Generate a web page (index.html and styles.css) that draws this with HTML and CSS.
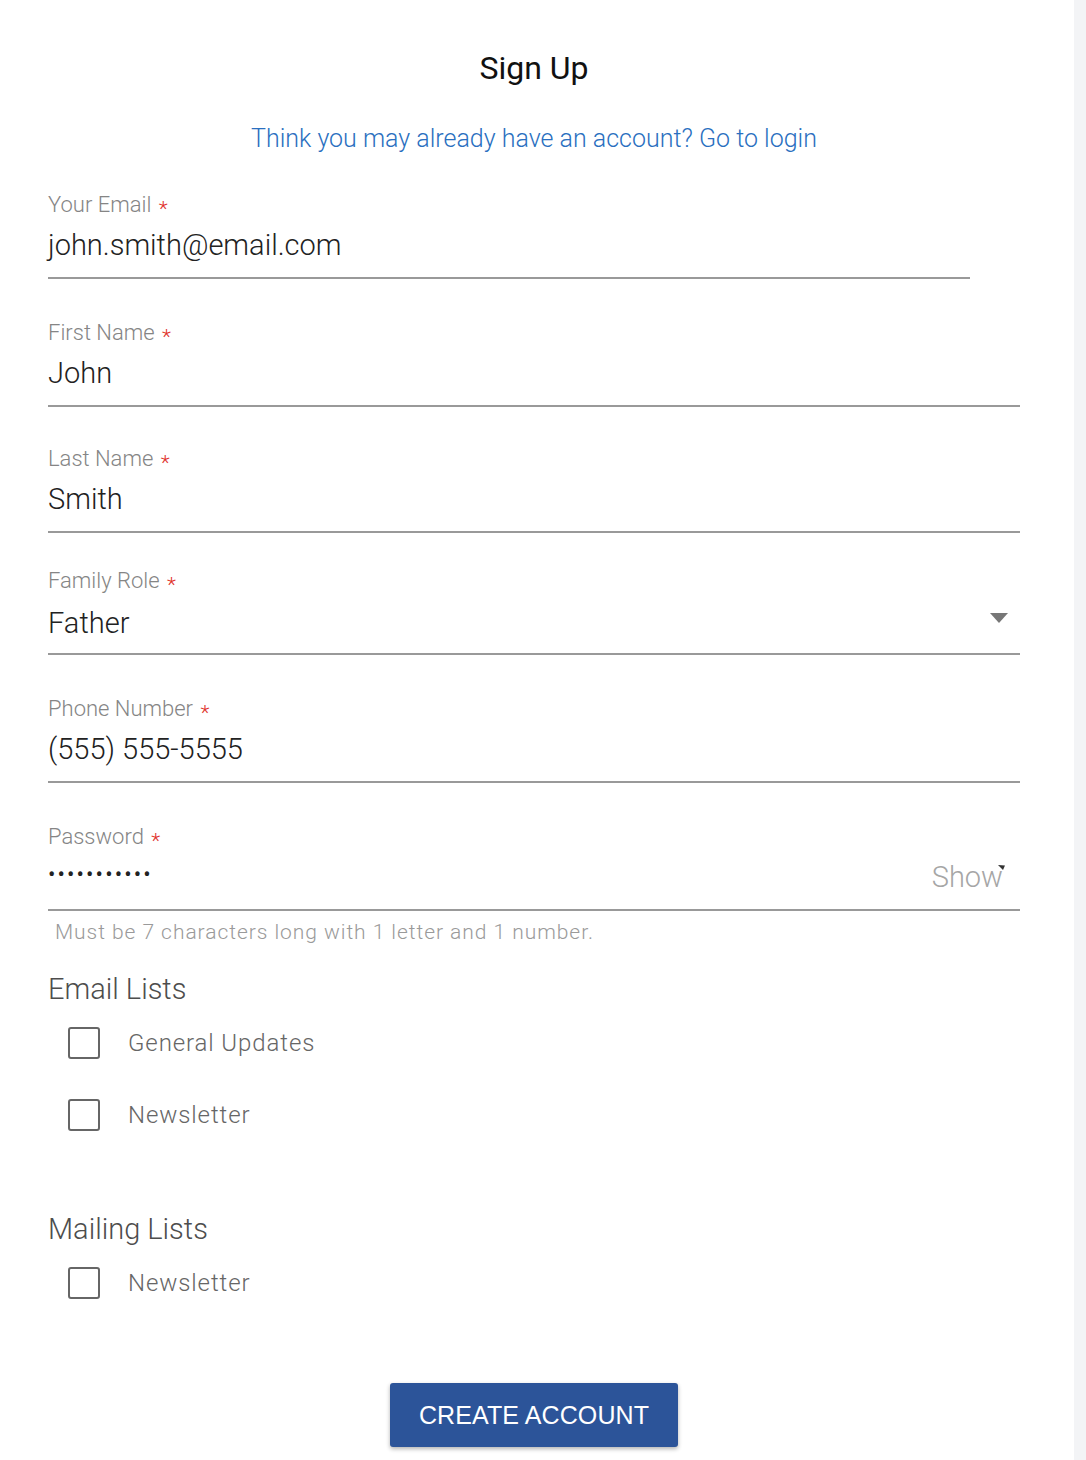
FILE: index.html
```html
<!DOCTYPE html>
<html lang="en">
<head>
<meta charset="utf-8">
<title>Sign Up</title>
<link rel="stylesheet" href="styles.css">
</head>
<body>
<main class="signup">
  <h1 class="title">Sign Up</h1>
  <p class="login"><a class="login-link" href="#">Think you may already have an account? Go to login</a></p>

  <div class="field field-email">
    <label class="label">Your Email <span class="req">*</span></label>
    <div class="control"><span class="value">john.smith@email.com</span></div>
  </div>

  <div class="field">
    <label class="label">First Name <span class="req">*</span></label>
    <div class="control"><span class="value">John</span></div>
  </div>

  <div class="field field-sm">
    <label class="label">Last Name <span class="req">*</span></label>
    <div class="control"><span class="value">Smith</span></div>
  </div>

  <div class="field field-xs">
    <label class="label">Family Role <span class="req">*</span></label>
    <div class="control control-select">
      <span class="value">Father</span>
      <svg class="caret" width="18" height="10" viewBox="0 0 18 10"><path d="M0 0H18L9 10Z" fill="#777"/></svg>
    </div>
  </div>

  <div class="field">
    <label class="label">Phone Number <span class="req">*</span></label>
    <div class="control"><span class="value">(555) 555-5555</span></div>
  </div>

  <div class="field">
    <label class="label">Password <span class="req">*</span></label>
    <div class="control control-password">
      <span class="value dots">•••••••••••</span>
      <span class="show">Show<svg class="cursor" width="7" height="5" viewBox="0 0 7 5"><path d="M0 0L7 0.5L5 5Z" fill="#333"/></svg></span>
    </div>
  </div>
  <p class="helper">Must be 7 characters long with 1 letter and 1 number.</p>

  <section class="group">
    <h2 class="group-title">Email Lists</h2>
    <ul class="options">
      <li class="option"><span class="box"></span><span class="option-label">General Updates</span></li>
      <li class="option"><span class="box"></span><span class="option-label">Newsletter</span></li>
    </ul>
  </section>

  <section class="group group-mailing">
    <h2 class="group-title">Mailing Lists</h2>
    <ul class="options">
      <li class="option"><span class="box"></span><span class="option-label">Newsletter</span></li>
    </ul>
  </section>

  <div class="actions">
    <button class="btn" type="button">CREATE ACCOUNT</button>
  </div>
</main>
</body>
</html>
```

FILE: styles.css
```css
html, body {
  margin: 0;
  padding: 0;
  overflow: hidden;
}

body {
  background: #f3f4f6;
  font-family: Roboto, "Liberation Sans", Arial, sans-serif;
}

.signup {
  box-sizing: border-box;
  width: 1074px;
  min-height: 1460px;
  background: #ffffff;
  padding: 49px 54px 0 48px;
}

.title {
  margin: 0;
  text-align: center;
  font-size: 32px;
  line-height: 38px;
  font-weight: 400;
  color: #111;
}

.login {
  margin: 37px 0 0;
  text-align: center;
  font-size: 25px;
  line-height: 30px;
  font-weight: 300;
}

.login-link {
  color: #2a6fc0;
  text-decoration: none;
}

.field {
  margin-top: 42px;
}

.field-email {
  margin-top: 39px;
  width: 922px;
}

.field-sm {
  margin-top: 40px;
}

.field-xs {
  margin-top: 36px;
}

.label {
  display: block;
  font-size: 22px;
  line-height: 24px;
  font-weight: 300;
  color: #858585;
}

.req {
  margin-left: 2px;
  font-size: 21px;
  line-height: 0;
  color: #e0302a;
  vertical-align: -4px;
}

.control {
  display: flex;
  align-items: flex-start;
  justify-content: space-between;
  margin-top: 10px;
  padding-bottom: 14px;
  border-bottom: 2px solid #999;
}

.value {
  font-size: 29px;
  line-height: 36px;
  font-weight: 300;
  color: #222;
}

.control-select {
  margin-top: 12px;
  padding-bottom: 12px;
}

.caret {
  margin: 8px 12px 0 0;
}

.dots {
  font-size: 22px;
  line-height: 32px;
  letter-spacing: 2.1px;
  color: #222;
  font-weight: 400;
}

.show {
  position: relative;
  margin-right: 17px;
  font-size: 29px;
  line-height: 36px;
  font-weight: 300;
  color: #a6a6a6;
}

.cursor {
  position: absolute;
  right: -2px;
  top: 6px;
}

.helper {
  margin: 9px 0 0 7px;
  font-size: 21px;
  line-height: 24px;
  font-weight: 300;
  letter-spacing: 0.95px;
  color: #9a9a9a;
}

.group {
  margin-top: 28px;
}

.group-mailing {
  margin-top: 81px;
}

.group-title {
  margin: 0;
  font-size: 29px;
  line-height: 34px;
  font-weight: 300;
  color: #4d4d4d;
}

.options {
  list-style: none;
  margin: 21px 0 0;
  padding: 0;
  display: flex;
  flex-direction: column;
  gap: 40px;
}

.option {
  display: flex;
  align-items: center;
  padding-left: 20px;
  height: 32px;
}

.box {
  box-sizing: border-box;
  width: 32px;
  height: 32px;
  border: 2px solid #666;
  border-radius: 3px;
  margin-right: 28px;
}

.option-label {
  font-size: 24px;
  line-height: 30px;
  font-weight: 300;
  color: #666;
  letter-spacing: 0.9px;
}

.actions {
  display: flex;
  justify-content: center;
  margin-top: 84px;
}

.btn {
  width: 288px;
  height: 64px;
  border: none;
  border-radius: 3px;
  background: #2c5499;
  color: #fff;
  font-family: "Liberation Sans", Arial, sans-serif;
  font-size: 25px;
  letter-spacing: 0.1px;
  box-shadow: 0 2px 4px rgba(0, 0, 0, 0.3);
  padding: 0;
}
```
